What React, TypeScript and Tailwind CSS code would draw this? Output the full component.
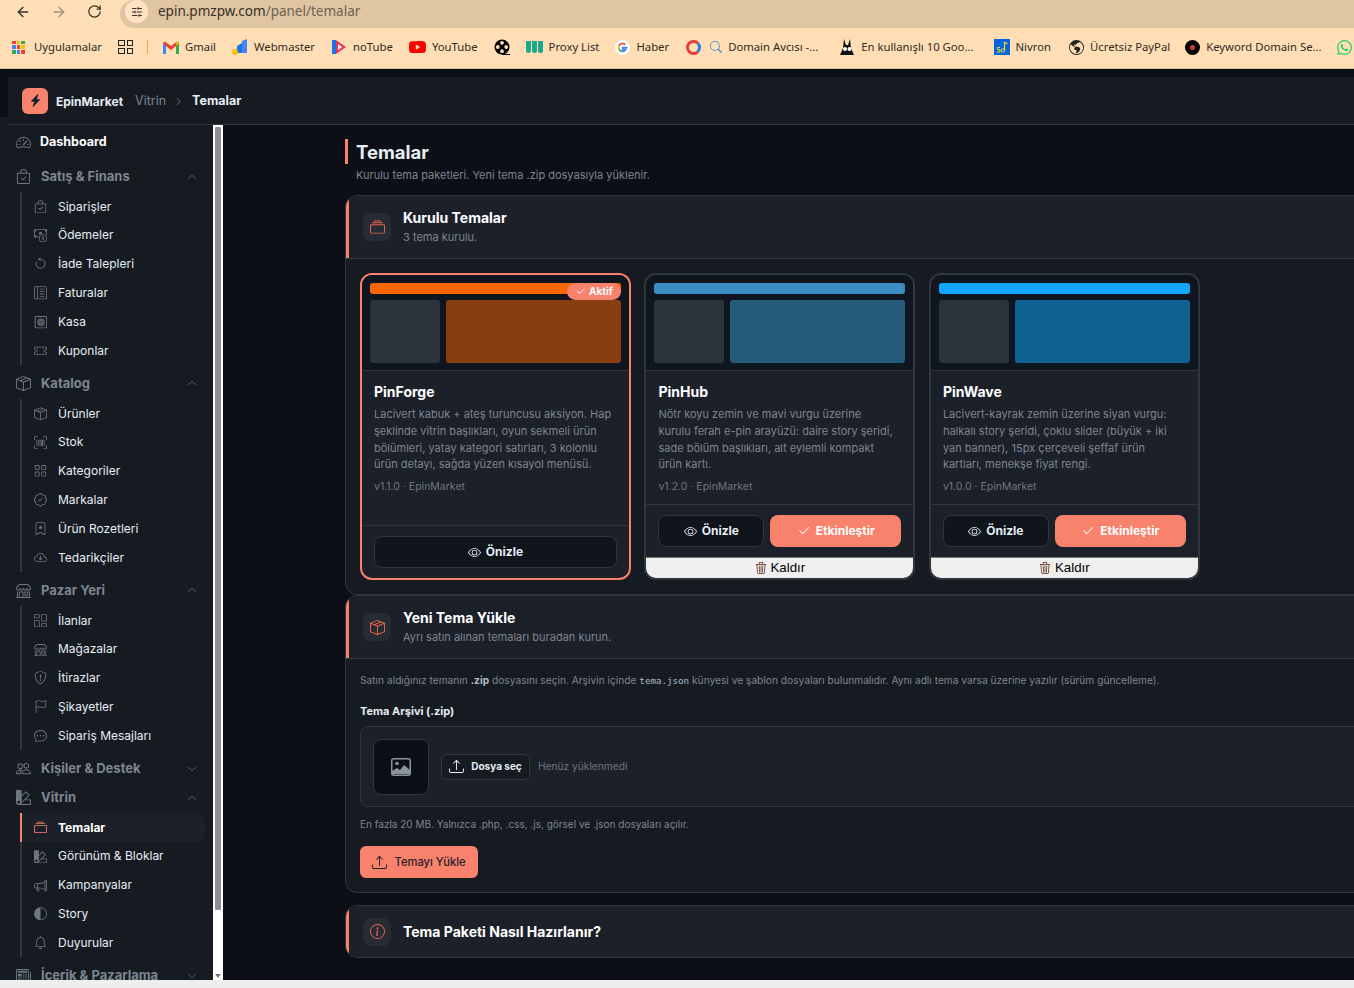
import type { ReactNode } from 'react';
import { ArrowLeft, ArrowRight, RotateCw, SlidersHorizontal } from 'lucide-react';
import {
  BsSpeedometer2, BsBagCheck, BsCashCoin, BsArrowCounterclockwise, BsLayoutTextSidebarReverse, BsSafe2,
  BsTicketPerforated, BsBoxSeam, BsUpcScan, BsGrid, BsPatchCheck, BsBookmarkStar, BsCloudArrowDown, BsShop,
  BsColumnsGap, BsShieldExclamation, BsFlag, BsChatDots, BsPeople, BsPalette2, BsCollection, BsMegaphone,
  BsCircleHalf, BsBell, BsNewspaper, BsChevronUp, BsChevronDown, BsChevronRight, BsLightningChargeFill,
  BsEye, BsCheck2, BsTrash3, BsUpload, BsInfoCircle, BsGlobeAmericas, BsWhatsapp, BsYoutube, BsSearch,
} from 'react-icons/bs';

type NavItem = { label: string; icon: ReactNode; active?: boolean };
type NavGroup = { label: string; icon: ReactNode; open: boolean; items: NavItem[] };

const groups: NavGroup[] = [
  {
    label: 'Satış & Finans', icon: <BsBagCheck />, open: true, items: [
      { label: 'Siparişler', icon: <BsBagCheck /> },
      { label: 'Ödemeler', icon: <BsCashCoin /> },
      { label: 'İade Talepleri', icon: <BsArrowCounterclockwise /> },
      { label: 'Faturalar', icon: <BsLayoutTextSidebarReverse /> },
      { label: 'Kasa', icon: <BsSafe2 /> },
      { label: 'Kuponlar', icon: <BsTicketPerforated /> },
    ],
  },
  {
    label: 'Katalog', icon: <BsBoxSeam />, open: true, items: [
      { label: 'Ürünler', icon: <BsBoxSeam /> },
      { label: 'Stok', icon: <BsUpcScan /> },
      { label: 'Kategoriler', icon: <BsGrid /> },
      { label: 'Markalar', icon: <BsPatchCheck /> },
      { label: 'Ürün Rozetleri', icon: <BsBookmarkStar /> },
      { label: 'Tedarikçiler', icon: <BsCloudArrowDown /> },
    ],
  },
  {
    label: 'Pazar Yeri', icon: <BsShop />, open: true, items: [
      { label: 'İlanlar', icon: <BsColumnsGap /> },
      { label: 'Mağazalar', icon: <BsShop /> },
      { label: 'İtirazlar', icon: <BsShieldExclamation /> },
      { label: 'Şikayetler', icon: <BsFlag /> },
      { label: 'Sipariş Mesajları', icon: <BsChatDots /> },
    ],
  },
  { label: 'Kişiler & Destek', icon: <BsPeople />, open: false, items: [] },
  {
    label: 'Vitrin', icon: <BsPalette2 />, open: true, items: [
      { label: 'Temalar', icon: <BsCollection />, active: true },
      { label: 'Görünüm & Bloklar', icon: <BsPalette2 /> },
      { label: 'Kampanyalar', icon: <BsMegaphone /> },
      { label: 'Story', icon: <BsCircleHalf /> },
      { label: 'Duyurular', icon: <BsBell /> },
    ],
  },
  { label: 'İçerik & Pazarlama', icon: <BsNewspaper />, open: false, items: [] },
];

const themes = [
  {
    name: 'PinForge', active: true, stripe: 'bg-[#ff6600]', box: 'bg-[#883e11]', version: 'v1.1.0 · EpinMarket',
    desc: 'Lacivert kabuk + ateş turuncusu aksiyon. Hap\nşeklinde vitrin başlıkları, oyun sekmeli ürün\nbölümleri, yatay kategori satırları, 3 kolonlu\nürün detayı, sağda yüzen kısayol menüsü.',
  },
  {
    name: 'PinHub', active: false, stripe: 'bg-[#3b8ec4]', box: 'bg-[#245a7c]', version: 'v1.2.0 · EpinMarket',
    desc: 'Nötr koyu zemin ve mavi vurgu üzerine\nkurulu ferah e-pin arayüzü: daire story şeridi,\nsade bölüm başlıkları, alt eylemli kompakt\nürün kartı.',
  },
  {
    name: 'PinWave', active: false, stripe: 'bg-[#10a5ff]', box: 'bg-[#106092]', version: 'v1.0.0 · EpinMarket',
    desc: 'Lacivert-kayrak zemin üzerine siyan vurgu:\nhalkalı story şeridi, çoklu slider (büyük + iki\nyan banner), 15px çerçeveli şeffaf ürün\nkartları, menekşe fiyat rengi.',
  },
];

const GmailIcon = () => (
  <svg viewBox="0 0 16 13" className="w-4 h-[13px]">
    <path d="M0 2v11h3V5l5 4 5-4v8h3V2L14 .5 8 5 2 .5z" fill="#ea4335" />
    <path d="M0 2v11h3V5z" fill="#4285f4" />
    <path d="M13 5v8h3V2z" fill="#34a853" />
    <path d="M14 .5 16 2l-3 3V2z" fill="#fbbc04" />
  </svg>
);

const WebmasterIcon = () => (
  <svg viewBox="0 0 16 16" className="w-4 h-4">
    <path d="M10 2l5-2v14h-5z" fill="#4285f4" />
    <path d="M5 7l5-3v10H5z" fill="#1a73e8" />
    <circle cx="3" cy="13" r="3" fill="#fbbc04" />
  </svg>
);

const NoTubeIcon = () => (
  <svg viewBox="0 0 16 16" className="w-4 h-4">
    <path d="M1 1h4v14H1z" fill="#1a73e8" />
    <path d="M5 1l10 7-10 7z" fill="#ea3a55" />
    <path d="M7 5l4 3-4 3z" fill="#fff" />
  </svg>
);

const GoogleIcon = () => (
  <svg viewBox="0 0 16 16" className="w-[15px] h-[15px]">
    <circle cx="8" cy="8" r="8" fill="#fff" />
    <path d="M13.5 8.2H8.2v2h3a3.2 3.2 0 0 1-3.2 2" stroke="#4285f4" strokeWidth="1.8" fill="none" />
    <path d="M8 12.2a4.2 4.2 0 0 1-3.8-2.4" stroke="#34a853" strokeWidth="1.8" fill="none" />
    <path d="M4.2 9.8a4.2 4.2 0 0 1 0-3.6" stroke="#fbbc04" strokeWidth="1.8" fill="none" />
    <path d="M4.2 6.2A4.2 4.2 0 0 1 11 5" stroke="#ea4335" strokeWidth="1.8" fill="none" />
  </svg>
);

const ReelIcon = () => (
  <svg viewBox="0 0 16 16" className="w-4 h-4">
    <circle cx="8" cy="8" r="7.5" fill="#000" />
    <path d="M8 15h8v1H8z" fill="#000" />
    <circle cx="8" cy="3.8" r="1.9" fill="#ffdeb5" />
    <circle cx="8" cy="12.2" r="1.9" fill="#ffdeb5" />
    <circle cx="3.8" cy="8" r="1.9" fill="#ffdeb5" />
    <circle cx="12.2" cy="8" r="1.9" fill="#ffdeb5" />
  </svg>
);

const RabbitIcon = () => (
  <svg viewBox="0 0 16 16" className="w-4 h-4">
    <path d="M4 9 5 0l2 6h2l2-6 1 9 3 7H1z" fill="#111" />
    <circle cx="6" cy="10" r="2" fill="#fff" />
    <circle cx="10.5" cy="10" r="2" fill="#fff" />
  </svg>
);

const NivronIcon = () => (
  <svg viewBox="0 0 16 16" className="w-4 h-4">
    <rect width="16" height="16" fill="#0a63d8" />
    <path d="M10.5 3v8.5M10.5 3l3 2" stroke="#e2e22a" strokeWidth="1.2" fill="none" />
    <circle cx="8.8" cy="11.5" r="1.7" fill="none" stroke="#e2e22a" />
    <path d="M6 8.5H3.5v2.2H6V13H3" stroke="#e2e22a" fill="none" />
  </svg>
);

const bookmarks: { label: string; icon: ReactNode; gap: string }[] = [
  { label: 'Webmaster', icon: <WebmasterIcon />, gap: 'ml-[16px]' },
  { label: 'noTube', icon: <NoTubeIcon />, gap: 'ml-[16px]' },
  { label: 'YouTube', icon: <BsYoutube className="text-[#f00] text-[17px]" />, gap: 'ml-[16px]' },
  { label: '', icon: <ReelIcon />, gap: 'ml-[16px]' },
  { label: 'Proxy List', icon: <span className="flex gap-px"><span className="w-[5px] h-3 rounded-b-sm bg-[#1aa98e]" /><span className="w-[5px] h-3 rounded-b-sm bg-[#1aa98e]" /><span className="w-[5px] h-3 rounded-b-sm bg-[#1aa98e]" /></span>, gap: 'ml-[16px]' },
  { label: 'Haber', icon: <GoogleIcon />, gap: 'ml-[16px]' },
  {
    label: 'Domain Avcısı -...',
    icon: (
      <span className="flex items-center gap-[9px]">
        <span className="w-[15px] h-[15px] rounded-full border-[3px] border-[#ea3a3a] border-r-[#2a7de1]" />
        <BsSearch className="text-[12px] text-[#4a8fd8]" />
      </span>
    ),
    gap: 'ml-[17px]',
  },
  { label: 'En kullanışlı 10 Goo...', icon: <RabbitIcon />, gap: 'ml-[21px]' },
  { label: 'Nivron', icon: <NivronIcon />, gap: 'ml-[20px]' },
  { label: 'Ücretsiz PayPal', icon: <BsGlobeAmericas className="text-[#222] text-[15px]" />, gap: 'ml-[18px]' },
  { label: 'Keyword Domain Se...', icon: <span className="w-[15px] h-[15px] rounded-full bg-black flex items-center justify-center"><span className="w-[5px] h-[5px] rounded-full bg-[#d83a3a]" /></span>, gap: 'ml-[15px]' },
];

const SubRow = ({ item }: { item: NavItem }) => (
  <div className={`relative h-[28.8px] flex items-center pl-3 mr-2 ${item.active ? 'bg-[#1c2129] rounded-r-lg' : ''}`}>
    {item.active && <span className="absolute -left-[2px] top-0 bottom-0 w-[2px] bg-[#f9826c]" />}
    <span className={`w-[13px] flex justify-center text-[13.5px] ${item.active ? 'text-[#f9826c]' : 'text-[#6e7681]'}`}>{item.icon}</span>
    <span className={`ml-[11px] text-[12px] ${item.active ? 'font-bold text-white' : 'text-[#e6edf3]'}`}>{item.label}</span>
  </div>
);

const Group = ({ group }: { group: NavGroup }) => (
  <div className={group.open ? 'mb-1' : ''}>
    <div className="h-[29px] flex items-center pl-4 pr-4">
      <span className="w-[15px] flex justify-center text-[15px] text-[#6e7681]">{group.icon}</span>
      <span className="ml-[10px] flex-1 text-[13px] font-bold text-[#7d8590] whitespace-nowrap">{group.label}</span>
      {group.open ? <BsChevronUp className="text-[10px] text-[#6e7681]" /> : <BsChevronDown className="text-[10px] text-[#6e7681]" />}
    </div>
    {group.open && (
      <div className="mt-[1.2px] ml-5 border-l-2 border-[#30363d]">
        {group.items.map((item) => <SubRow key={item.label} item={item} />)}
      </div>
    )}
  </div>
);

const Sidebar = () => (
  <aside className="w-[223px] shrink-0 flex overflow-hidden">
    <div className="w-[213px] bg-[#161b22] overflow-hidden">
      <div className="h-[29px] mt-[3px] mb-[5px] flex items-center pl-4">
        <BsSpeedometer2 className="text-[15px] text-[#6e7681]" />
        <span className="ml-[9px] text-[12.5px] font-bold text-white">Dashboard</span>
      </div>
      {groups.map((group) => <Group key={group.label} group={group} />)}
    </div>
    <div className="w-[10px] bg-white px-[2px] pt-[2px] flex flex-col justify-between">
      <div className="h-[783px] bg-[#8f8f8f] rounded-[1px]" />
      <div className="mb-[2px] mx-auto w-0 h-0 border-x-[3px] border-x-transparent border-t-[4px] border-t-[#777]" />
    </div>
  </aside>
);

const CardHeader = ({ icon, title, sub }: { icon: ReactNode; title: string; sub?: string }) => (
  <div className={`bg-[#1c2029] border-l-[3px] border-[#f9826c] pl-[14px] flex items-center gap-3 ${sub ? 'h-[62px]' : 'h-[51px]'}`}>
    <span className="w-7 h-7 rounded-lg bg-[#262b34] flex items-center justify-center text-[15px] text-[#e8664e]">{icon}</span>
    <div>
      <div className="text-[14px] font-bold leading-[20px] text-white">{title}</div>
      {sub && <div className="text-[11px] leading-[18px] text-[#7d8590]">{sub}</div>}
    </div>
  </div>
);

const ThemeCard = ({ theme }: { theme: (typeof themes)[number] }) => (
  <div className={`w-[270.9px] rounded-xl border-2 overflow-hidden flex flex-col bg-[#1c2029] ${theme.active ? 'border-[#f9826c]' : 'border-[#30363d]'}`}>
    <div className="relative h-[96px] shrink-0 bg-[#0f1620] border-b border-[#30363d] px-2 pt-2">
      <div className={`h-[11px] rounded-[3px] ${theme.stripe}`} />
      <div className="mt-[6px] flex gap-[6px]">
        <div className="w-[70px] h-[63px] rounded-[3px] bg-[#2d333b]" />
        <div className={`flex-1 h-[63px] rounded-[3px] ${theme.box}`} />
      </div>
      {theme.active && (
        <span className="absolute right-2 top-2 h-[17px] w-[54px] rounded-full bg-[#f9826c] flex items-center justify-center gap-[3px] text-[10px] font-bold text-white">
          <BsCheck2 className="text-[11px]" />Aktif
        </span>
      )}
    </div>
    <div className="flex-1 px-3 pt-[12px]">
      <div className="text-[14px] font-bold leading-[18px] text-white">{theme.name}</div>
      <p className="mt-[5px] whitespace-pre-line text-[11px] leading-[16.8px] text-[#7d8590]">{theme.desc}</p>
      <div className="mt-[6px] text-[10.5px] leading-[16px] text-[#6e7681]">{theme.version}</div>
    </div>
    <div className="mt-[9px] border-t border-[#30363d] px-3 py-[10px] flex gap-[6px]">
      <button className="flex-1 h-8 rounded-lg border border-[#30363d] bg-[#10141b] flex items-center justify-center gap-[5px] text-[12px] font-bold text-[#e6edf3]">
        <BsEye className="text-[13px]" />Önizle
      </button>
      {!theme.active && (
        <button className="w-[131px] h-8 rounded-lg bg-[#f9826c] flex items-center justify-center gap-[5px] text-[12px] font-bold text-white">
          <BsCheck2 className="text-[14px]" />Etkinleştir
        </button>
      )}
    </div>
    {!theme.active && (
      <button className="h-[21px] bg-[#efefef] border-t border-[#767676] flex items-center justify-center gap-1 text-[13.3px] text-black font-['Liberation_Sans',sans-serif]">
        <BsTrash3 className="text-[12px] text-[#5a2410]" />Kaldır
      </button>
    )}
  </div>
);

export default function App() {
  return (
    <div className="w-[1354px] h-[988px] overflow-hidden flex flex-col bg-[#0c0f16] font-['Inter',sans-serif]">
      <div className="h-[28px] shrink-0 bg-[#ffdfb8] flex items-center pl-[15px] text-[#3a3026]">
        <ArrowLeft size={16} strokeWidth={2} className="mb-[5px]" />
        <ArrowRight size={16} strokeWidth={2} className="ml-5 mb-[5px] text-[#a08f7c]" />
        <RotateCw size={15} strokeWidth={2} className="ml-5 mb-[5px]" />
        <div className="ml-[18px] flex-1 h-full bg-[#dfc5a2] rounded-l-[14px] flex items-center pl-[5px] pb-[5px]">
          <span className="w-[23px] h-[23px] rounded-full bg-[#ffe3c2] flex items-center justify-center">
            <SlidersHorizontal size={12} strokeWidth={2} />
          </span>
          <span className="ml-[10px] text-[13.5px] font-['Noto_Sans',sans-serif]">epin.pmzpw.com<span className="text-[#6f6251]">/panel/temalar</span></span>
        </div>
      </div>

      <div className="h-[41px] shrink-0 bg-[#ffdeb5] border-b border-[#d6bfa0] flex items-center pl-3 pb-[2px] whitespace-nowrap text-[11.3px] text-[#33291f] font-['Noto_Sans',sans-serif]">
        <span className="grid grid-cols-3 gap-px w-[13px] h-[13px]">
          {['bg-[#ea4335]', 'bg-[#fbbc04]', 'bg-[#34a853]', 'bg-[#4285f4]', 'bg-[#ea4335]', 'bg-[#fbbc04]', 'bg-[#34a853]', 'bg-[#4285f4]', 'bg-[#ea4335]'].map((c, i) => (
            <span key={i} className={c} />
          ))}
        </span>
        <span className="ml-[9px]">Uygulamalar</span>
        <span className="ml-4 grid grid-cols-2 gap-[2px] w-[15px]">
          {[0, 1, 2, 3].map((i) => <span key={i} className="h-[6px] border-[1.5px] border-[#222]" />)}
        </span>
        <span className="ml-[14px] w-px h-[14px] bg-[#f0a040]" />
        <span className="ml-[15px]"><GmailIcon /></span>
        <span className="ml-[6px]">Gmail</span>
        {bookmarks.map((b) => (
          <span key={b.label || 'film'} className={`flex items-center ${b.gap}`}>
            {b.icon}
            {b.label && <span className="ml-[6px]">{b.label}</span>}
          </span>
        ))}
        <BsWhatsapp className="ml-[15px] text-[15px] shrink-0 text-[#25d366]" />
      </div>

      <div className="h-2 shrink-0" />

      <div className="h-[48px] shrink-0 flex">
        <div className="w-2 flex flex-col">
          <div className="flex-1" />
          <div className="h-2 bg-[#161b22]" />
        </div>
        <header className="flex-1 bg-[#161b22] border-b border-[#30363d] flex items-center pl-[14px]">
          <span className="w-[26px] h-[26px] rounded-md bg-[#f9826c] flex items-center justify-center text-[13px] text-[#1c2029]">
            <BsLightningChargeFill />
          </span>
          <span className="ml-2 mt-[2px] text-[12px] font-bold text-[#e6edf3]">EpinMarket</span>
          <span className="ml-3 mt-[2px] text-[12.5px] text-[#7d8590]">Vitrin</span>
          <BsChevronRight className="ml-2 mt-[2px] text-[9px] text-[#7d8590]" />
          <span className="ml-[9px] mt-[2px] text-[12.5px] font-bold text-[#e6edf3]">Temalar</span>
        </header>
      </div>

      <div className="flex-1 min-h-0 flex">
        <Sidebar />
        <main className="flex-1 min-w-0 overflow-hidden pl-[122px] pt-[14px]">
          <div className="w-[1100px]">
            <div className="border-l-[3px] border-[#f9826c] h-[25px] pl-2 pt-[3px] flex items-center text-[18.5px] font-bold text-[#e6edf3]">Temalar</div>
            <div className="pl-[11px] mt-[2px] text-[11px] leading-[18px] text-[#7d8590]">Kurulu tema paketleri. Yeni tema .zip dosyasıyla yüklenir.</div>

            <section className="mt-[11px] rounded-xl border border-[#30363d] bg-[#161b22] overflow-hidden">
              <CardHeader icon={<BsCollection />} title="Kurulu Temalar" sub="3 tema kurulu." />
              <div className="border-t border-[#30363d] p-[14px] flex gap-[13.55px]">
                {themes.map((theme) => <ThemeCard key={theme.name} theme={theme} />)}
              </div>
            </section>

            <section className="rounded-xl border border-[#30363d] bg-[#161b22] overflow-hidden">
              <CardHeader icon={<BsBoxSeam />} title="Yeni Tema Yükle" sub="Ayrı satın alınan temaları buradan kurun." />
              <div className="border-t border-[#30363d] px-[14px] pt-[13px] pb-[14px]">
                <p className="text-[10.2px] leading-[16px] text-[#7d8590]">
                  Satın aldığınız temanın <b className="text-[#adbac7]">.zip</b> dosyasını seçin. Arşivin içinde <code className="font-['DejaVu_Sans_Mono',monospace] text-[#adbac7] text-[9.2px]">tema.json</code> künyesi ve şablon dosyaları bulunmalıdır. Aynı adlı tema varsa üzerine yazılır (sürüm güncelleme).
                </p>
                <div className="mt-[14px] text-[11px] font-bold leading-[16px] text-[#e6edf3]">Tema Arşivi (.zip)</div>
                <div className="mt-[7px] h-[81px] rounded-lg border border-[#30363d] bg-[#1c2029] flex items-center pl-3">
                  <div className="w-[56px] h-[56px] rounded-lg border border-[#30363d] bg-[#0c0f16] flex items-center justify-center">
                    <svg viewBox="0 0 20 18" className="w-5 h-[18px] text-[#8b949e]">
                      <rect x=".75" y=".75" width="18.5" height="16.5" rx="2" fill="none" stroke="currentColor" strokeWidth="1.5" />
                      <circle cx="6" cy="5.5" r="1.8" fill="currentColor" />
                      <path d="M1 16v-3l5-3 3 2 4-5 6 5v4z" fill="currentColor" />
                    </svg>
                  </div>
                  <button className="ml-3 h-[26px] w-[89px] rounded-md border border-[#30363d] bg-[#161b22] flex items-center justify-center gap-[7px] text-[10px] font-bold text-[#e6edf3]">
                    <BsUpload className="text-[15px]" />Dosya seç
                  </button>
                  <span className="ml-2 text-[10.2px] text-[#6e7681]">Henüz yüklenmedi</span>
                </div>
                <p className="mt-[9px] text-[10px] leading-[16px] text-[#7d8590]">En fazla 20 MB. Yalnızca .php, .css, .js, görsel ve .json dosyaları açılır.</p>
                <button className="mt-[14px] h-8 w-[118px] rounded-md bg-[#f9826c] flex items-center justify-center gap-[7px] text-[11.2px] font-medium text-[#1c2029]">
                  <BsUpload className="text-[15px]" />Temayı Yükle
                </button>
              </div>
            </section>

            <section className="mt-3 rounded-xl border border-[#30363d] overflow-hidden">
              <CardHeader icon={<BsInfoCircle />} title="Tema Paketi Nasıl Hazırlanır?" />
            </section>
          </div>
        </main>
      </div>

      <div className="h-2 shrink-0 bg-[#eeeeee]" />
    </div>
  );
}
